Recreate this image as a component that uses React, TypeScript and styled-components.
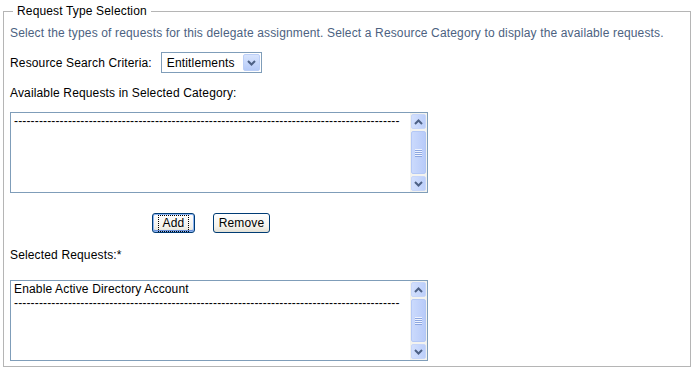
import styled, { createGlobalStyle } from 'styled-components';

const GlobalStyle = createGlobalStyle`
  html, body {
    margin: 0;
    padding: 0;
    background: #ffffff;
  }
  body {
    font-family: "Liberation Sans", Arial, sans-serif;
    font-size: 12px;
    letter-spacing: 0.15px;
    color: #000000;
  }
`;

const DASHES = '-'.repeat(93);

const Frame = styled.fieldset`
  margin: 4px 5px 0 3px;
  padding: 0 6px 5px 6px;
  border: 1px solid #b5b5b5;
  min-width: 0;
`;

const Legend = styled.legend`
  margin-left: 3px;
  padding: 0 4px;
  font-size: 12px;
  line-height: 14px;
  color: #000000;
`;

const Intro = styled.p`
  margin: 8px 0 0 0;
  line-height: 14px;
  color: #4c6281;
`;

const CriteriaRow = styled.div`
  display: flex;
  align-items: center;
  gap: 9px;
  margin-top: 12px;
`;

const Label = styled.div<{ $top: number }>`
  margin-top: ${p => p.$top}px;
  line-height: 14px;
`;

const Select = styled.div`
  width: 101px;
  height: 21px;
  box-sizing: border-box;
  border: 1px solid #7f9db9;
  display: flex;
  align-items: center;
  justify-content: space-between;
  padding: 0 1px 0 5px;
  background: #ffffff;
`;

const DropButton = styled.div`
  width: 17px;
  height: 17px;
  box-sizing: border-box;
  border: 1px solid #bccff7;
  border-radius: 2px;
  background: linear-gradient(#d8e4fd, #b6cbf8);
  display: flex;
  align-items: center;
  justify-content: center;
`;

const ListBox = styled.div<{ $top: number }>`
  margin-top: ${p => p.$top}px;
  width: 418px;
  height: 81px;
  box-sizing: border-box;
  border: 1px solid #7f9db9;
  display: flex;
  background: #ffffff;
`;

const Items = styled.div`
  flex: 1;
  overflow: hidden;
  padding: 1px 0 0 3px;
`;

const Item = styled.div`
  line-height: 14px;
  white-space: nowrap;
`;

const Scrollbar = styled.div`
  width: 17px;
  display: flex;
  flex-direction: column;
  gap: 1px;
  background: #f3f3ef;
  padding: 1px 0;
  box-sizing: border-box;
`;

const ScrollButton = styled.div`
  height: 15px;
  margin: 0 1px;
  box-sizing: border-box;
  border: 1px solid #c7d6f9;
  border-radius: 2px;
  background: linear-gradient(90deg, #d3e0fd, #bccffa);
  display: flex;
  align-items: center;
  justify-content: center;
`;

const Thumb = styled.div`
  flex: 1;
  margin: 1px 1px;
  box-sizing: border-box;
  border: 1px solid #b4c8f6;
  border-radius: 2px;
  background: linear-gradient(90deg, #cbdafc, #b8cbf9);
  display: flex;
  align-items: center;
  justify-content: center;
`;

const ButtonRow = styled.div`
  display: flex;
  gap: 18px;
  margin-top: 20px;
  padding-left: 142px;
`;

const Button = styled.button<{ $focused?: boolean; $width: number }>`
  font-family: "Liberation Sans", Arial, sans-serif;
  font-size: 12px;
  letter-spacing: 0.15px;
  width: ${p => p.$width}px;
  height: 20px;
  padding: 0;
  border: 1px solid #003c74;
  border-radius: 3px;
  color: #000000;
  background: linear-gradient(#ffffff, #f3f2ec 70%, #e3e1d6);
  box-shadow: ${p => (p.$focused ? 'inset 0 0 0 1px #8cb4f2, inset 0 -1px 0 1px #6a90d8' : 'none')};
  display: flex;
  align-items: center;
  justify-content: center;
  line-height: 13px;
`;

const FocusText = styled.span`
  outline: 1px dotted #000000;
  padding: 1px 4px;
`;

function Chevron({ down }: { down?: boolean }) {
  return (
    <svg width="9" height="6" viewBox="0 0 9 6">
      <path
        d={down ? 'M1 1 L4.5 4.5 L8 1' : 'M1 5 L4.5 1.5 L8 5'}
        fill="none"
        stroke="#4d6185"
        strokeWidth="2"
      />
    </svg>
  );
}

function Grip() {
  return (
    <svg width="7" height="8" viewBox="0 0 7 8">
      <path d="M0 0.5 H7 M0 2.5 H7 M0 4.5 H7 M0 6.5 H7" stroke="#eef3fe" strokeWidth="1" />
      <path d="M0 1.5 H7 M0 3.5 H7 M0 5.5 H7 M0 7.5 H7" stroke="#8ca6e0" strokeWidth="1" />
    </svg>
  );
}

function List({ top, items }: { top: number; items: string[] }) {
  return (
    <ListBox $top={top}>
      <Items>
        {items.map((it, i) => (
          <Item key={i}>{it}</Item>
        ))}
      </Items>
      <Scrollbar>
        <ScrollButton>
          <Chevron />
        </ScrollButton>
        <Thumb>
          <Grip />
        </Thumb>
        <ScrollButton>
          <Chevron down />
        </ScrollButton>
      </Scrollbar>
    </ListBox>
  );
}

export default function App() {
  return (
    <>
      <GlobalStyle />
      <Frame>
        <Legend>Request Type Selection</Legend>
        <Intro>
          Select the types of requests for this delegate assignment. Select a Resource Category to display the available requests.
        </Intro>
        <CriteriaRow>
          <span>Resource Search Criteria:</span>
          <Select>
            <span>Entitlements</span>
            <DropButton>
              <Chevron down />
            </DropButton>
          </Select>
        </CriteriaRow>
        <Label $top={13}>Available Requests in Selected Category:</Label>
        <List top={12} items={[DASHES]} />
        <ButtonRow>
          <Button $focused $width={43}>
            <FocusText>Add</FocusText>
          </Button>
          <Button $width={57}>Remove</Button>
        </ButtonRow>
        <Label $top={15}>Selected Requests:*</Label>
        <List top={18} items={['Enable Active Directory Account', DASHES]} />
      </Frame>
    </>
  );
}
